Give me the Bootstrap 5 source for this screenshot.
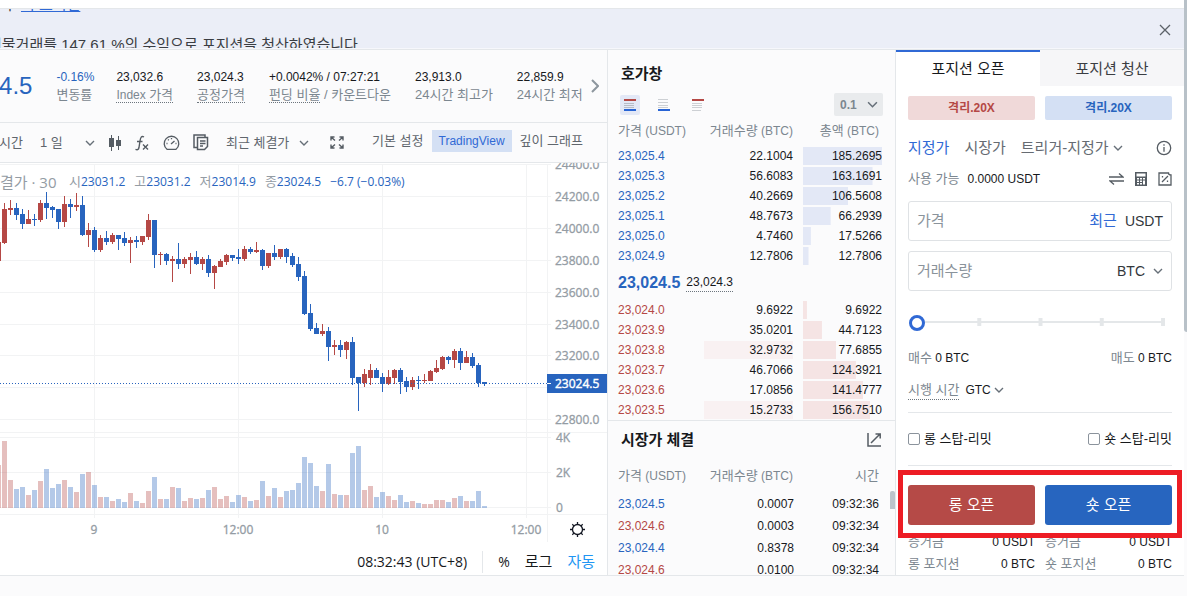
<!DOCTYPE html>
<html lang="ko">
<head>
<meta charset="utf-8">
<meta name="viewport" content="width=device-width, initial-scale=1">
<title>BTC/USDT 선물 거래</title>
<link href="https://cdn.jsdelivr.net/npm/bootstrap@5.3.0/dist/css/bootstrap.min.css" rel="stylesheet">
<style>
:root{--up:#2864be;--down:#b54845;--link:#3069d5;--dim:#7c8790;--text:#17191c;--line:#e4e7ea;--panel:#fbfbfc}
body{font-family:"Liberation Sans","Noto Sans CJK KR",sans-serif;font-size:12px;line-height:18px;color:var(--text);background:var(--panel);overflow:hidden}
button,input,select{font-family:inherit}
a{text-decoration:none}
svg{display:block;flex:none}
.page{padding-right:3px;position:relative}
.page-thumb{position:absolute;right:0;top:0;width:3px;height:332px;background:#b8c1c8;border-radius:0 0 0 3px}
.topbar{height:9px;background:#fff;border-bottom:1px solid var(--line)}
.notice{height:40px;background:#ebeef7;font-size:15px;line-height:40px;color:#3a3d42;overflow:hidden;position:relative;border-bottom:1px solid #f6f7fb}
.notice-lines{margin-top:-24px;margin-left:-12px;white-space:nowrap}
.notice-first{padding-left:15px}
.notice-first a{color:var(--link);text-decoration:underline}
.notice-close{position:absolute;right:13px;top:15px;width:12px;height:12px;line-height:0}
.bare{border:0;background:none;padding:0;color:inherit}
.ko{font-size:13px}
.up{color:var(--up)}.down{color:var(--down)}.dim{color:var(--dim)}.bare.blue{color:var(--link)}
.dotted{border-bottom:1px dotted #6c757d}
.workspace{border-top:1px solid var(--line);border-bottom:1px solid var(--line)}
.chart-side{flex:1 1 0;min-width:0;background:var(--panel);border-right:1px solid var(--line)}
.book-side{flex:0 0 288px;border-right:1px solid var(--line)}
.order-side{flex:0 0 288px;background:#fff}
.ticker{height:73px;border-bottom:1px solid var(--line);white-space:nowrap}
.ticker-scroll{overflow:hidden;flex:1 1 0;min-width:0}
.ticker-items{margin-left:-61px}
.last-price{font-size:24px;line-height:30px;width:94px}
.change{width:36px}
.toolbar{height:40px;border-bottom:1px solid var(--line);color:#60666d;font-size:13px;white-space:nowrap}
.tools{gap:13px;margin-left:-1px}
.pick{appearance:none;border:0;border-radius:0;color:inherit;background:transparent url("data:image/svg+xml,%3Csvg xmlns='http://www.w3.org/2000/svg' viewBox='0 0 10 10'%3E%3Cpath d='M1 3l4 4 4-4' fill='none' stroke='%23666f78' stroke-width='1.4'/%3E%3C/svg%3E") no-repeat right center/10px 10px;padding:0;line-height:18px}
.pick-day{width:55px}
.pick-price{width:83px}
.view-on{background:#d4e0f4;color:var(--link);padding:2px 7px;font-size:12px}
.plot{background:#fff;position:relative}
.plot > svg{width:100%;height:auto}
.legend-row{position:absolute;left:0;top:9px;gap:9px;font:12px/18px "Open Sans","Noto Sans CJK KR",sans-serif;color:#949ca4;white-space:nowrap}
.pair{font-size:15px;width:60px}
.chart-foot{background:#fff;height:29px;font-size:15px;white-space:nowrap;gap:15px;padding-top:2px}
.clock,.percent{font-family:"Open Sans",sans-serif;font-size:14px}
.auto-on{color:#2196f3}
.rule{width:1px;height:22px;background:var(--line)}
.title{font-size:15px;line-height:20px;font-weight:600;margin:0}
.book-head{padding:14px 13px 0}
.book-tools{padding:9px 12px 0}
.depth-modes{gap:14px}
.depth-on{background:#e3e8f6;border-radius:2px}
.pick-step{width:49px;height:23px;background-color:#e9ebed;border-radius:2px;padding-left:6px;background-position:33px center;background-size:11px 11px;color:#7c8790;font-weight:700}
.book-body{padding-left:10px}
.quotes{width:264px;table-layout:fixed;border-collapse:collapse;margin:0}
.quotes th,.quotes td{padding:0;text-align:right;white-space:nowrap}
.quotes th{font-weight:400;color:var(--dim)}
.quotes th:first-child,.quotes td:first-child{text-align:left;width:86px}
.quotes th:nth-child(2){width:89px}
.quotes td:nth-child(3){padding-left:10px}
.quotes th:nth-child(3){padding-right:3px}
.head-tall th{height:30px}
.level td{height:20px}
.depth{background:linear-gradient(var(--tint),var(--tint)) no-repeat left center/100% 18px;height:18px}
.bids{--tint:#e3e8f6}.asks{--tint:#f5e4e4}.faint{--tint:#f9f1f2}
.mid{padding:7px 0 8px;gap:6px}
.mid-price{font-size:16px;font-weight:700}
.trade-box{border-top:1px solid var(--line);position:relative}
.trade-head{padding:9px 13px 0}
.trade-cols{margin-top:17px}
.trades{height:82px;overflow:hidden;margin-top:8px}
.trades td{height:22px}
.trades td:nth-child(3){padding-right:3px}
.thumb{position:absolute;right:0;top:70px;width:5px;height:18px;background:#bcc4cb;border-radius:2px 2px 0 0}
.side-tab{flex:1 1 0;font-size:15px;height:36px;border:0;border-top:2px solid transparent;background:#f6f6f8;color:#3a3d42;padding:0}
.side-tab.active{background:#fff;border-top-color:var(--link);color:var(--text)}
.body-pad{padding:10px 12px 2px}
.lever-row,.open-row{gap:10px}
.lever{flex:1 1 0;height:24px;border:0;border-radius:2px;font-size:12px;font-weight:700;padding:0}
.lever-long{background:#f0d9d9;color:var(--down)}.lever-short{background:#d4e0f4;color:var(--up)}
.kind-row{font-size:15px;color:#666b72;white-space:nowrap;gap:15px;margin-top:18px;height:20px}
.pick-kind{width:102px}
.avail-row{margin-top:12px;height:18px}
.icon-set{gap:11px}
.field{height:40px;border:1px solid #dfe2e5;border-radius:3px;padding:0 8px;font-size:14px;color:#33373c;margin-top:10px}
.avail-row + .field{margin-top:13px}
.field input{border:0;outline:0;background:none;font-size:15px;min-width:0;width:80px;padding:0}
.field input::placeholder{color:#8a939b}
.field .blue{font-size:15px}
.pick-unit{width:46px}
.pick-tif{width:39px}
.steps{position:relative;height:16px;margin-top:24px;padding-left:1px}
.steps::before{content:"";position:absolute;left:12px;right:7px;top:3px;height:8px;background:linear-gradient(to left,#e4e7e9 4px,transparent 4px) 0 0/25% 8px,linear-gradient(#e4e7e9,#e4e7e9) 0 3px/100% 2px no-repeat}
.steps input{appearance:none;position:relative;display:block;width:100%;height:16px;background:none;margin:0}
.steps input::-webkit-slider-thumb{appearance:none;width:16px;height:16px;border-radius:50%;background:#fff;border:3px solid var(--link)}
.side-row{margin-top:18px;height:18px}
.tif-row{margin-top:14px;height:18px;gap:6px}
.tif-row + .split{margin-top:13px}
.split{height:1px;background:var(--line)}
.stop-row{height:52px;align-items:center}
.tick{appearance:none;width:12px;height:12px;border:1px solid #8b939c;border-radius:2px;background:#fff;margin:0}
.open-row{margin-top:19px}
.open-btn{flex:1 1 0;height:40px;border:0;border-radius:3px;color:#fff;font-size:15px;padding:0}
.open-long{background:#b54a47}.open-short{background:#2765bf}
.spotlight{position:absolute;inset:-15px -10px -13px;border:5px solid #ed1c24;pointer-events:none}
.totals{display:grid;grid-template-columns:1fr 1fr;column-gap:10px;row-gap:4px;margin-top:8px}
</style>
</head>
<body>
<div class="page">
  <div class="topbar"></div>
  <div class="notice">
    <div class="notice-lines">
      <div class="notice-first">ㅣ <a href="#">의 포지션</a></div>
      <div>선물거래를 147.61 %의 수익으로 포지션을 청산하였습니다</div>
    </div>
    <button class="bare notice-close" type="button" aria-label="닫기">
      <svg width="12" height="12" viewBox="0 0 12 12" fill="none" stroke="#5c6269" stroke-width="1.3"><path d="M1 1l10 10M11 1L1 11"/></svg>
    </button>
  </div>

  <main class="workspace d-flex">
    <section class="chart-side">
      <div class="ticker d-flex align-items-center">
        <div class="ticker-scroll">
          <div class="ticker-items d-flex align-items-center">
            <div class="last-price up">23,024.5</div>
            <div class="ms-4 change"><div class="up">-0.16%</div><div class="ko dim">변동률</div></div>
            <div class="ms-4"><div>23,032.6</div><span class="dim dotted">Index <span class="ko">가격</span></span></div>
            <div class="ms-4"><div>23,024.3</div><span class="ko dim dotted">공정가격</span></div>
            <div class="ms-4"><div>+0.0042% / 07:27:21</div><div class="ko dim"><span class="dotted">펀딩 비율</span> / 카운트다운</div></div>
            <div class="ms-4"><div>23,913.0</div><div class="ko dim">24시간 최고가</div></div>
            <div class="ms-4"><div>22,859.9</div><div class="ko dim">24시간 최저가</div></div>
          </div>
        </div>
        <button class="bare ps-2 pe-2" type="button" aria-label="다음">
          <svg width="8" height="14" viewBox="0 0 8 14" fill="none" stroke="#8d969e" stroke-width="2"><path d="M1 1l6 6-6 6"/></svg>
        </button>
      </div>

      <div class="toolbar d-flex align-items-center">
        <div class="tools d-flex align-items-center flex-grow-1">
          <button class="bare me-1" type="button">시간</button>
          <select class="pick pick-day" aria-label="간격"><option>1 일</option></select>
          <svg width="14" height="16" viewBox="0 0 14 16" fill="#555c63"><path d="M3 0h1v3h2v9H4v4H3v-4H1V3h2zM10 1h1v4h2v6h-2v4h-1v-4H8V5h2z"/></svg>
          <svg width="15" height="16" viewBox="0 0 15 16" fill="none" stroke="#555c63" stroke-width="1.4"><path d="M9 2C6.500 .5 5.500 2.500 5 6L4 12.500C3.500 15 2 15 .5 14.300M2 6.500h5.500M8 9.500l5 5M13 9.500l-5 5"/></svg>
          <svg width="17" height="16" viewBox="0 0 17 16" fill="none" stroke="#555c63" stroke-width="1.3"><path d="M4 14.300a7.300 7.300 0 1 1 9 0zM8 9l3.500-3M3.500 8.500h1M5 4.500l.8.8M8.500 3v1.300M12.500 8.500h1"/></svg>
          <svg width="16" height="17" viewBox="0 0 16 17" fill="none" stroke="#555c63" stroke-width="1.5"><path d="M4 13.500H1V1h11v2M4.500 3.500h10v9l-3 3h-7zM7 7h5.500M7 9.500h5.500M7 12h3"/></svg>
          <select class="pick pick-price ms-1" aria-label="가격 기준"><option>최근 체결가</option></select>
          <svg class="ms-2" width="14" height="13" viewBox="0 0 14 13" fill="none" stroke="#555c63" stroke-width="1.4"><path d="M1 4.500V1h3.500M1 1l4 3.500M9.500 1H13v3.500M13 1L9 4.500M1 8.500V12h3.500M1 12l4-3.500M13 8.500V12H9.500M13 12L9 8.500"/></svg>
        </div>
        <div class="d-flex align-items-center gap-2 pe-4 pb-1">
          <button class="bare" type="button">기본 설정</button>
          <button class="bare view-on" type="button">TradingView</button>
          <button class="bare" type="button">깊이 그래프</button>
        </div>
      </div>

      <div class="plot">
        <svg id="plot" viewBox="0 163 607 383" font-family="Open Sans, sans-serif" font-size="12" fill="#949ca4"></svg>
        <div class="legend-row d-flex align-items-center">
          <span class="pair">결가 · 30</span>
          <span><span class="ko">시</span><span class="up">23031.2</span></span>
          <span><span class="ko">고</span><span class="up">23031.2</span></span>
          <span><span class="ko">저</span><span class="up">23014.9</span></span>
          <span><span class="ko">종</span><span class="up">23024.5</span></span>
          <span class="up">−6.7 (−0.03%)</span>
        </div>
      </div>

      <div class="chart-foot d-flex align-items-center justify-content-end pe-2">
        <span class="clock">08:32:43 (UTC+8)</span>
        <span class="rule"></span>
        <button class="bare percent" type="button">%</button>
        <button class="bare" type="button">로그</button>
        <button class="bare auto-on me-1" type="button">자동</button>
      </div>
    </section>

    <section class="book-side">
      <div class="book-head">
        <h2 class="title">호가창</h2>
      </div>
      <div class="book-tools d-flex align-items-center justify-content-between">
        <div class="d-flex depth-modes">
          <button class="bare depth-on p-1" type="button" aria-label="전체"><svg width="12" height="12" viewBox="0 0 12 12"><path fill="#b54845" d="M0 0h12v2H0z"/><path fill="#b7bcc6" d="M0 4h10v1H0zM0 6h10v1H0zM0 8h10v1H0z"/><path fill="#2864d5" d="M0 10h12v2H0z"/></svg></button>
          <button class="bare p-1" type="button" aria-label="매수"><svg width="12" height="12" viewBox="0 0 12 12"><path fill="#cdd0d4" d="M0 0h10v1H0zM0 3h10v1H0zM0 6h10v1H0zM0 8h10v1H0z"/><path fill="#2864d5" d="M0 10h12v2H0z"/></svg></button>
          <button class="bare p-1" type="button" aria-label="매도"><svg width="12" height="12" viewBox="0 0 12 12"><path fill="#b54845" d="M0 0h12v2H0z"/><path fill="#cdd0d4" d="M0 4h10v1H0zM0 6h10v1H0zM0 8h10v1H0zM0 11h9v1H0z"/></svg></button>
        </div>
        <select class="pick pick-step" aria-label="호가 단위"><option>0.1</option></select>
      </div>
      <div class="book-body">
        <table class="quotes" id="bids">
          <thead class="head-tall"><tr><th><span class="ko">가격</span> (USDT)</th><th><span class="ko">거래수량</span> (BTC)</th><th><span class="ko">총액</span> (BTC)</th></tr></thead>
          <tbody class="level"></tbody>
        </table>
        <div class="mid d-flex align-items-center"><span class="mid-price up">23,024.5</span><span class="dotted">23,024.3</span></div>
        <table class="quotes" id="asks" aria-label="매도 호가"><colgroup><col style="width:86px"><col style="width:89px"><col></colgroup><tbody class="level"></tbody></table>
      </div>
      <div class="trade-box">
        <div class="trade-head d-flex align-items-center justify-content-between">
          <h2 class="title">시장가 체결</h2>
          <svg width="15" height="14" viewBox="0 0 15 14" fill="none" stroke="#555c63" stroke-width="1.500"><path d="M1 0v13h13M4 10l9-9M8.500 1H13.200v4.500"/></svg>
        </div>
        <div class="book-body">
          <table class="quotes trade-cols"><thead><tr><th><span class="ko">가격</span> (USDT)</th><th><span class="ko">거래수량</span> (BTC)</th><th class="ko">시간</th></tr></thead></table>
          <div class="trades"><table class="quotes" aria-label="체결 내역"><colgroup><col style="width:86px"><col style="width:90px"><col></colgroup><tbody id="trades"></tbody></table></div>
        </div>
        <span class="thumb"></span>
      </div>
    </section>

    <section class="order-side">
      <div class="d-flex">
        <button class="side-tab active" type="button">포지션 오픈</button>
        <button class="side-tab" type="button">포지션 청산</button>
      </div>
      <div class="body-pad">
        <div class="d-flex lever-row">
          <button class="lever lever-long" type="button">격리.20X</button>
          <button class="lever lever-short" type="button">격리.20X</button>
        </div>
        <div class="d-flex align-items-center kind-row">
          <button class="bare blue" type="button">지정가</button>
          <button class="bare" type="button">시장가</button>
          <select class="pick pick-kind" aria-label="주문 유형"><option>트리거-지정가</option></select>
          <svg class="ms-auto" width="16" height="16" viewBox="0 0 16 16" fill="none" stroke="#555c63" stroke-width="1.300"><circle cx="8" cy="8" r="6.700"/><path d="M8 4.200v1.500M8 7v4.800"/></svg>
        </div>
        <div class="d-flex align-items-center avail-row">
          <span class="ko dim me-2">사용 가능</span><span>0.0000 USDT</span>
          <div class="ms-auto d-flex align-items-center icon-set">
            <svg width="15" height="14" viewBox="0 0 15 14" fill="none" stroke="#555c63" stroke-width="1.300"><path d="M0 5h14L10 1.500M15 9H1l4 3.500"/></svg>
            <svg width="12" height="14" viewBox="0 0 12 14"><path fill="#555c63" fill-rule="evenodd" d="M0 0h12v14H0zM1.500 1.500v3h9v-3zM2 6v1.500h2V6zM5 6v1.500h2V6zM8 6v1.500h2V6zM2 8.500V10h2V8.500zM5 8.500V10h2V8.500zM8 8.500v4h2v-4zM2 11v1.500h2V11zM5 11v1.500h2V11z"/></svg>
            <svg width="14" height="14" viewBox="0 0 14 14" fill="none" stroke="#555c63" stroke-width="1.300"><path d="M1 13V1h9.500q0 2 2.500 2v10zM4 10l6-6M4.500 4v1.500M9.500 8.500V10"/></svg>
          </div>
        </div>
        <div class="field d-flex align-items-center">
          <input type="text" aria-label="가격" placeholder="가격">
          <button class="bare blue ms-auto me-2" type="button">최근</button><span>USDT</span>
        </div>
        <div class="field d-flex align-items-center">
          <input type="text" aria-label="거래수량" placeholder="거래수량">
          <select class="pick pick-unit ms-auto" aria-label="단위"><option>BTC</option></select>
        </div>
        <div class="steps"><input type="range" min="0" max="100" value="0" aria-label="비율"></div>
        <div class="d-flex justify-content-between side-row">
          <span><span class="ko dim">매수</span> 0 BTC</span><span><span class="ko dim">매도</span> 0 BTC</span>
        </div>
        <div class="d-flex align-items-center tif-row">
          <span class="ko dim dotted">시행 시간</span>
          <select class="pick pick-tif" aria-label="시행 시간"><option>GTC</option></select>
        </div>
        <div class="split"></div>
        <div class="d-flex justify-content-between stop-row">
          <label class="d-flex align-items-center gap-1 ko"><input class="tick" type="checkbox">롱 스탑-리밋</label>
          <label class="d-flex align-items-center gap-1 ko"><input class="tick" type="checkbox">숏 스탑-리밋</label>
        </div>
        <div class="split"></div>
        <div class="d-flex position-relative open-row">
          <button class="open-btn open-long" type="button">롱 오픈</button>
          <button class="open-btn open-short" type="button">숏 오픈</button>
          <div class="spotlight"></div>
        </div>
        <div class="totals">
          <div class="d-flex justify-content-between"><span class="ko dim">증거금</span><span>0 USDT</span></div>
          <div class="d-flex justify-content-between"><span class="ko dim">증거금</span><span>0 USDT</span></div>
          <div class="d-flex justify-content-between"><span class="ko dim">롱 포지션</span><span>0 BTC</span></div>
          <div class="d-flex justify-content-between"><span class="ko dim">숏 포지션</span><span>0 BTC</span></div>
        </div>
      </div>
    </section>
  </main>
  <span class="page-thumb"></span>
</div>
<script src="https://cdn.jsdelivr.net/npm/bootstrap@5.3.0/dist/js/bootstrap.bundle.min.js"></script>
<script>
// depth rows: price, amount, total, width of the cumulative bar in %, highlighted amount
const bids=[['23,025.4','22.1004','185.2695',100],['23,025.3','56.6083','163.1691',88],['23,025.2','40.2669','106.5608',57],['23,025.1','48.7673','66.2939',35],['23,025.0','4.7460','17.5266',10],['23,024.9','12.7806','12.7806',7]];
const asks=[['23,024.0','9.6922','9.6922',5],['23,023.9','35.0201','44.7123',24],['23,023.8','32.9732','77.6855',42,1],['23,023.7','46.7066','124.3921',67],['23,023.6','17.0856','141.4777',76],['23,023.5','15.2733','156.7510',85,1]];
const level=(r,c,t)=>`<tr><td class="${c}">${r[0]}</td><td>${r[4]?`<div class="depth faint">${r[1]}</div>`:r[1]}</td><td><div class="depth ${t}" style="background-size:${r[3]}% 18px">${r[2]}</div></td></tr>`;
document.querySelector('#bids tbody').innerHTML=bids.map(r=>level(r,'up','bids')).join('');
document.querySelector('#asks tbody').innerHTML=asks.map(r=>level(r,'down','asks')).join('');
document.getElementById('trades').innerHTML=[['23,024.5','0.0007','09:32:36','up'],['23,024.6','0.0003','09:32:34','down'],['23,024.4','0.8378','09:32:34','up'],['23,024.6','0.0100','09:32:34','down']].map(r=>`<tr><td class="${r[3]}">${r[0]}</td><td>${r[1]}</td><td>${r[2]}</td></tr>`).join('');

// candles: direction, high, body top, body bottom, low, volume top (third-pixel units below y=160; volume below y=420)
const candles=`R246,246,303,303,135 R129,147,249,252,63 R120,144,150,165,180 B129,144,165,180,207 B147,162,192,207,201 R150,177,192,192,225 B162,177,180,198,210 R120,129,180,186,183 B95,129,144,177,147 B138,141,150,174,204 B147,147,186,207,192 R108,132,186,201,180 B117,132,141,174,201 R99,135,141,153,216 B108,135,225,228,162 R189,210,225,261,156 B201,210,270,276,195 R225,234,270,276,231 B213,234,246,255,231 R219,225,246,252,243 B225,225,237,270,237 B216,234,249,258,246 R231,240,249,309,219 B228,240,246,264,243 R228,228,246,255,249 R162,180,231,240,213 B180,180,285,324,171 R276,282,285,315,237 B279,282,303,315,237 R288,297,303,366,201 B249,297,312,327,204 R291,297,312,324,243 R279,291,300,342,234 B273,291,312,315,237 R291,297,312,330,234 B285,297,339,351,210 R315,318,339,387,201 R297,303,321,321,237 R282,285,306,315,228 B285,285,294,303,246 B267,291,297,312,225 R258,267,297,303,231 B261,267,276,282,243 R246,270,276,279,240 B267,270,318,330,183 R279,279,318,324,228 B255,279,291,300,204 R267,267,291,297,231 B264,267,291,309,213 B279,288,315,321,210 B291,312,351,363,189 B333,348,462,465,111 B432,459,507,513,129 B489,504,522,522,198 R492,513,522,528,213 B501,513,561,603,132 R540,555,561,585,222 B540,555,570,591,225 R543,546,570,597,225 B531,546,654,675,99 B651,651,669,753,78 R627,642,669,681,210 R612,630,654,675,198 B624,630,654,654,231 B639,651,672,696,216 R630,651,672,675,228 R627,630,654,672,240 B624,630,666,702,225 B651,663,681,696,246 R651,660,681,690,243 B648,660,663,687,249 R642,660,663,669,252 R630,633,663,663,252 R600,624,636,639,240 R588,591,627,630,240 B588,591,600,612,246 R567,573,600,624,234 B564,573,609,630,228 R573,591,609,609,243 B579,591,618,624,243 B609,615,669,681,213 B666,666,672,678,258`.split(' ');
const rect=(x,y,w,h,f)=>`<rect x="${x}" y="${y}" width="${w}" height="${h}" fill="${f}"/>`;
let s='';
const grid='#f2f3f4';
for(const y of [164,196,228,260,292,324,355,387,419,437,472,507]) s+=rect(0,y,551,1,grid);
s+=rect(0,432,607,1,grid)+rect(0,514,607,1,grid);
for(const x of [94,238,382,526]) s+=rect(x,164,1,354,grid);
s+=rect(547,164,1,378,grid);
candles.forEach((c,n)=>{
  const x=6*n-4,[h,t,b,l,v]=c.slice(1).split(',').map(z=>Math.round(z/3)),up=c[0]==='R';
  s+=rect(x,420+v,5,88-v,up?'#b5484559':'#2864be59');
  s+=rect(x+2,160+h,1,Math.max(1,l-h),up?'#b54845':'#2864be')+rect(x,160+t,5,Math.max(1,b-t),up?'#b54845':'#2864be');
});
s+='<path d="M0 383.500H551" stroke="#2864be" stroke-dasharray="1 2"/>';
s+=rect(547,374,60,19,'#2864be')+rect(547,383,4,1,'#fff');
s+='<g stroke="#949ca4" stroke-width=".3">';
['24400.0','24200.0','24000.0','23800.0','23600.0','23400.0','23200.0'].forEach((t,i)=>s+=`<text x="555" y="${[169,201,233,265,297,329,360][i]}">${t}</text>`);
s+='<text x="555" y="424">22800.0</text><text x="556" y="442">4K</text><text x="556" y="477">2K</text><text x="556" y="512">0</text>';
[[94,'9'],[238,'12:00'],[382,'10'],[526,'12:00']].forEach(a=>s+=`<text x="${a[0]}" y="534" text-anchor="middle">${a[1]}</text>`);
s+='</g><text x="555" y="388" fill="#fff" stroke="#fff" stroke-width=".4">23024.5</text>';
s+='<g transform="translate(577.500 529.500)" fill="none" stroke="#131722" stroke-width="1.300"><circle r="5"/><path d="M0-5v-2.500M0 5v2.500M-5 0h-2.500M5 0h2.500M-3.600-3.600l-1.600-1.600M3.600-3.600l1.600-1.600M-3.600 3.600l-1.600 1.600M3.600 3.600l1.600 1.600"/></g>';
document.getElementById('plot').innerHTML=s;
</script>
</body>
</html>
